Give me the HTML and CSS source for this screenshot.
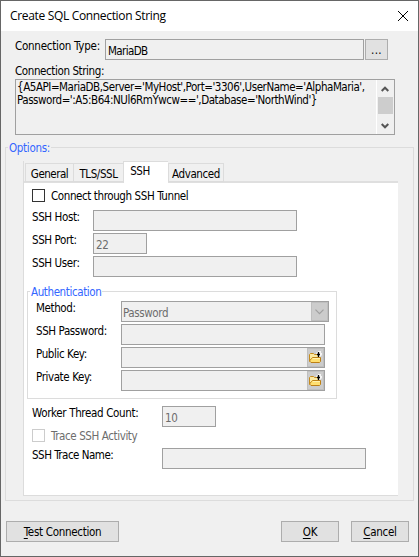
FILE: index.html
```html
<!DOCTYPE html>
<html lang="en">
<head>
<meta charset="utf-8">
<title>Create SQL Connection String</title>
<link rel="stylesheet" href="styles.css">
</head>
<body>
<div class="window">
  <header class="titlebar">
    <span class="title">Create SQL Connection String</span>
    <svg class="close" width="10" height="10" viewBox="0 0 10 10"><path d="M0 0L10 10M10 0L0 10" stroke="#000" fill="none"/></svg>
  </header>
  <main class="body">
    <div class="row type-row">
      <span class="label w-type">Connection Type:</span>
      <div class="field type-field">MariaDB</div>
      <button class="btn more">...</button>
    </div>
    <div class="label string-label">Connection String:</div>
    <div class="memo">
      <div class="memo-text"><div class="line1">{A5API=MariaDB,Server='MyHost',Port='3306',UserName='AlphaMaria',</div><div class="line2">Password=':A5:B64:NUl6RmYwcw==',Database='NorthWind'}</div></div>
      <div class="scrollbar">
        <svg width="8" height="6" viewBox="0 0 8 6"><path d="M.7 5L4 1.7L7.3 5" stroke="#555" stroke-width="2" fill="none"/></svg>
        <div class="thumb"></div>
        <svg width="8" height="6" viewBox="0 0 8 6"><path d="M.7 1L4 4.3L7.3 1" stroke="#555" stroke-width="2" fill="none"/></svg>
      </div>
    </div>
    <section class="group options">
      <div class="legend"><span>Options:</span></div>
      <div class="tabs">
        <div class="tab general">General</div>
        <div class="tab tls">TLS/SSL</div>
        <div class="tab active">SSH</div>
        <div class="tab advanced">Advanced</div>
      </div>
      <div class="panel">
        <div class="check"><i class="box"></i><span>Connect through SSH Tunnel</span></div>
        <div class="row ssh"><span class="label">SSH Host:</span><div class="field wide"></div></div>
        <div class="row ssh"><span class="label">SSH Port:</span><div class="field small">22</div></div>
        <div class="row ssh"><span class="label">SSH User:</span><div class="field wide"></div></div>
        <section class="group auth">
          <div class="legend"><span>Authentication</span></div>
          <div class="row"><span class="label">Method:</span><div class="field select">Password<span class="drop"><svg width="9" height="6" viewBox="0 0 9 6"><path d="M.5 .7L4.5 4.7L8.5 .7" stroke="#a0a0a0" stroke-width="1.2" fill="none"/></svg></span></div></div>
          <div class="row"><span class="label">SSH Password:</span><div class="field wide"></div></div>
          <div class="row"><span class="label">Public Key:</span><div class="field wide"><span class="browse"><svg width="13" height="13" viewBox="0 0 13 13"><path d="M7 2.5L8 1H9V0H12V2H13V4L11 6H8Z" fill="#f4f4f4"/><path d="M.5 10.5V3.5L1.5 2.5H4.5L5.5 3.5H8.5L9.5 4.5V7" fill="#fbe9a0" stroke="#c58a1c"/><path d="M2.5 7.5L3.5 6.5H11.5V10.5L10.5 11.5H2L.5 10Z" fill="#ffdf70" stroke="#bd8015"/><path d="M4 7.5H11" stroke="#fff2ae"/><path d="M9.5 1V6M8 3.5H11" stroke="#000" stroke-width="1.3"/></svg></span></div></div>
          <div class="row"><span class="label">Private Key:</span><div class="field wide"><span class="browse"><svg width="13" height="13" viewBox="0 0 13 13"><path d="M7 2.5L8 1H9V0H12V2H13V4L11 6H8Z" fill="#f4f4f4"/><path d="M.5 10.5V3.5L1.5 2.5H4.5L5.5 3.5H8.5L9.5 4.5V7" fill="#fbe9a0" stroke="#c58a1c"/><path d="M2.5 7.5L3.5 6.5H11.5V10.5L10.5 11.5H2L.5 10Z" fill="#ffdf70" stroke="#bd8015"/><path d="M4 7.5H11" stroke="#fff2ae"/><path d="M9.5 1V6M8 3.5H11" stroke="#000" stroke-width="1.3"/></svg></span></div></div>
        </section>
        <div class="row worker"><span class="label">Worker Thread Count:</span><div class="field small">10</div></div>
        <div class="check disabled"><i class="box"></i><span>Trace SSH Activity</span></div>
        <div class="row worker trace"><span class="label">SSH Trace Name:</span><div class="field wide"></div></div>
      </div>
    </section>
    <footer class="footer">
      <button class="btn test"><u>T</u>est Connection</button>
      <button class="btn ok"><u>O</u>K</button>
      <button class="btn cancel"><u>C</u>ancel</button>
    </footer>
  </main>
</div>
</body>
</html>
```
FILE: styles.css
```css
* { box-sizing: border-box; }
body { margin: 0; font: 11.5px/14px "DejaVu Sans Condensed", "DejaVu Sans", sans-serif; font-stretch: condensed; letter-spacing: -0.4px; color: #000; }
.window { width: 419px; height: 557px; border: 1px solid #666; background: #f0f0f0; overflow: hidden; }
.titlebar { height: 30px; background: #fff; display: flex; align-items: center; justify-content: space-between; padding: 0 10px 0 9px; }
.title { font: 12px/16px "Open Sans", sans-serif; letter-spacing: -0.33px; }
svg { display: block; flex: none; }
.label, .field, .tab, .check, .memo-text, .legend { white-space: nowrap; }
.row { display: flex; height: 23px; }
.field { height: 21px; border: 1px solid #a0a0a0; background: #f0f0f0; padding: 4px 2px 0 1px; }
.btn { height: 21px; border: 1px solid #adadad; background: #e1e1e1; font: inherit; letter-spacing: -0.3px; color: #000; padding: 0; }
.type-row { padding-left: 14px; margin-top: 8px; height: 21px; }
.type-row .label { width: 90px; letter-spacing: -0.25px; }
.type-field { width: 259px; margin-right: 1px; letter-spacing: -0.6px; padding-left: 2px; }
.more { width: 23px; letter-spacing: 0.3px; }
.string-label { margin: 4px 0 0 14px; height: 15px; }
.memo { display: flex; justify-content: space-between; width: 380px; height: 56px; margin: 0 0 12px 14px; padding-right: 1px; border: 1px solid #a0a0a0; }
.memo-text { padding: 1px 0 0 1px; line-height: 13px; letter-spacing: -0.45px; }
.scrollbar { width: 17px; border-left: 1px solid #fff; display: flex; flex-direction: column; align-items: center; padding: 6px 0 5px; }
.thumb { width: 15px; height: 17px; background: #cdcdcd; margin: 5px 0 9px; }
.group { border: 1px solid #dcdcdc; }
.legend { height: 0; color: #3366ff; }
.legend span { display: inline-block; position: relative; top: -7px; background: #f0f0f0; padding: 0 1px; }
.options { width: 409px; height: 354px; margin-left: 4px; }
.options > .legend { padding-left: 2px; letter-spacing: -0.3px; }
.tabs { display: flex; align-items: flex-end; height: 22px; margin: 13px 0 0 17px; width: 376px; padding-left: 1px; border-left: 1px solid #dcdcdc; position: relative; z-index: 1; }
.tab { height: 19px; border: 1px solid #dcdcdc; border-right: 0; padding-top: 3px; text-align: center; margin-bottom: 1px; }
.general { width: 48px; letter-spacing: -0.5px; }
.tls { width: 50px; }
.active { width: 45px; height: 22px; background: #fff; margin-bottom: 0; padding: 2px 12px 0 0; border-bottom: 0; }
.advanced { width: 56px; border-right: 1px solid #dcdcdc; }
.panel { width: 375px; height: 315px; margin: -2px 0 0 17px; background: #fff; border: 1px solid #dcdcdc; border-right: 0; border-top-width: 2px; border-top-color: #dfdfdf; }
.check { display: flex; align-items: center; height: 13px; padding-left: 8px; gap: 6px; }
.box { width: 13px; height: 13px; border: 1px solid #333; background: #fff; flex: none; }
.disabled { color: #6d6d6d; }
.disabled .box { border-color: #ccc; }
.panel > .check:first-child { margin: 6px 0 8px; }
.ssh { padding-left: 8px; }
.ssh .label { width: 61px; }
.wide { width: 204px; }
.small { width: 54px; color: #6d6d6d; padding-left: 2px; }
.auth { width: 310px; height: 108px; margin: 12px 0 7px 3px; padding-top: 9px; }
.auth .legend { margin: -9px 0 9px; padding-left: 2px; }
.auth .legend span { background: #fff; }
.auth .row { padding-left: 8px; }
.auth .label { width: 85px; }
.select { width: 208px; color: #6d6d6d; display: flex; justify-content: space-between; padding-right: 0; }
.drop { width: 17px; height: 19px; margin-top: -4px; background: #ccc; border: 1px solid #bfbfbf; display: flex; align-items: center; justify-content: center; }
.auth .wide { display: flex; justify-content: flex-end; padding: 0; }
.browse { width: 17px; height: 19px; background: #ccc; border: 1px solid #bfbfbf; display: flex; align-items: center; justify-content: center; }
.worker { padding-left: 8px; }
.worker .label { width: 130px; letter-spacing: -0.35px; }
.trace { margin-top: 6px; }
.trace .label { letter-spacing: -0.5px; }
.footer { display: flex; margin-top: 20px; padding-left: 5px; }
.test { width: 113px; }
.ok { width: 58px; margin: 0 12px 0 162px; }
.cancel { width: 58px; }
u { text-underline-offset: 2px; text-decoration-thickness: 1px; }
```
